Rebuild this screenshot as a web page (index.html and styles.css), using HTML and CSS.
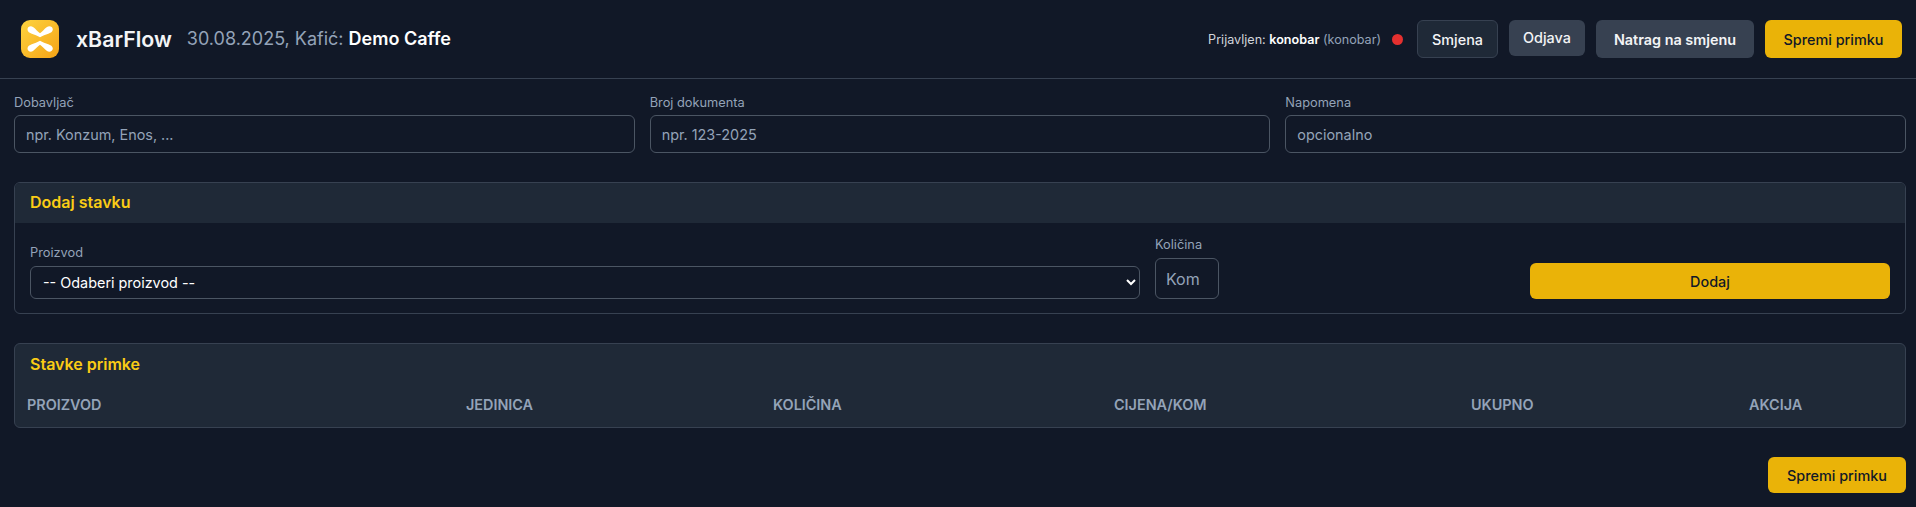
FILE: index.html
```html
<!DOCTYPE html>
<html lang="hr">
<head>
<meta charset="utf-8">
<title>xBarFlow</title>
<link rel="stylesheet" href="styles.css">
</head>
<body>
<header class="topbar">
  <div class="brand">
    <svg class="logo" viewBox="0 0 38 38" aria-hidden="true">
      <defs>
        <linearGradient id="lg" x1="0" y1="0" x2="1" y2="1">
          <stop offset="0" stop-color="#fdd33f"/>
          <stop offset="1" stop-color="#f5a316"/>
        </linearGradient>
      </defs>
      <rect width="38" height="38" rx="9" fill="url(#lg)"/>
      <path fill="#fff" d="M6.500 9.500C6.500 6.500 9.800 5.500 12 7C14.800 8.800 17 12.200 19 13.200C21 12.200 23.200 8.800 26 7C28.200 5.500 31.800 6.500 31.800 9.500C31.800 11.800 29.500 12.900 27.300 13.800C24.500 14.800 21.500 15.800 19 17.300C16.500 15.800 13.500 14.800 10.800 13.800C8.700 12.900 6.500 11.800 6.500 9.500Z"/>
      <path fill="#fff" d="M6.500 28.500C6.500 31.500 9.800 32.500 12 31C14.800 29.200 17 25.800 19 24.800C21 25.800 23.200 29.200 26 31C28.200 32.500 31.800 31.500 31.800 28.500C31.800 26.200 29.500 25.100 27.300 24.200C24.500 23.200 21.500 22.200 19 20.700C16.500 22.200 13.500 23.200 10.800 24.200C8.700 25.100 6.500 26.200 6.500 28.500Z"/>
    </svg>
    <span class="app-name">xBarFlow</span>
    <span class="context">30.08.2025, Kafić: <strong>Demo Caffe</strong></span>
  </div>
  <div class="actions">
    <span class="user">Prijavljen: <strong>konobar</strong> <span class="role">(konobar)</span></span>
    <span class="status-dot"></span>
    <button class="btn btn-outline" type="button">Smjena</button>
    <button class="btn btn-gray btn-short" type="button">Odjava</button>
    <button class="btn btn-gray btn-strong" type="button">Natrag na smjenu</button>
    <button class="btn btn-primary" type="button">Spremi primku</button>
  </div>
</header>

<main class="content">
  <section class="doc-fields">
    <label class="field"><span class="field-label">Dobavljač</span><input class="input" placeholder="npr. Konzum, Enos, ..."></label>
    <label class="field"><span class="field-label">Broj dokumenta</span><input class="input" placeholder="npr. 123-2025"></label>
    <label class="field"><span class="field-label">Napomena</span><input class="input" placeholder="opcionalno"></label>
  </section>

  <section class="card add-card">
    <h2 class="card-head">Dodaj stavku</h2>
    <div class="add-body">
      <label class="field product-field"><span class="field-label">Proizvod</span>
        <select class="select"><option>-- Odaberi proizvod --</option></select>
      </label>
      <label class="field qty-field"><span class="field-label">Količina</span><input class="input qty-input" placeholder="Kom"></label>
      <button class="btn btn-primary btn-add" type="button">Dodaj</button>
    </div>
  </section>

  <section class="card items-card">
    <h2 class="items-title">Stavke primke</h2>
    <table class="items">
      <colgroup>
        <col class="c1"><col class="c2"><col class="c3"><col class="c4"><col class="c5"><col class="c6">
      </colgroup>
      <thead>
        <tr><th>Proizvod</th><th>Jedinica</th><th>Količina</th><th>Cijena/kom</th><th>Ukupno</th><th>Akcija</th></tr>
      </thead>
    </table>
  </section>

  <div class="footer-actions">
    <button class="btn btn-primary btn-save" type="button">Spremi primku</button>
  </div>
</main>
</body>
</html>
```

FILE: styles.css
```css
* { box-sizing: border-box; }
html, body { height: 100%; }
body {
  margin: 0;
  background: #111827;
  color: #f3f4f6;
  font-family: Inter, "Liberation Sans", sans-serif;
  overflow: hidden;
}
.topbar {
  height: 79px;
  border-bottom: 1px solid #374151;
  padding: 0 14px 0 21px;
  display: flex;
  align-items: center;
  justify-content: space-between;
}
.brand { display: flex; align-items: center; }
.logo { width: 38px; height: 38px; margin-right: 17px; }
.app-name { font-size: 21.300px; font-weight: 600; color: #f3f4f6; margin-right: 15px; margin-top: -1px; }
.context { font-size: 18px; color: #94a3b8; margin-top: -1px; }
.context strong { color: #fff; font-weight: 600; }
.actions { display: flex; align-items: center; }
.user { font-size: 12.600px; color: #d1d5db; margin-right: 11px; }
.user strong { color: #fff; font-weight: 600; }
.role { color: #94a3b8; }
.status-dot { width: 11px; height: 11px; border-radius: 50%; background: #e5302f; margin-right: 14px; }
.btn {
  font-family: inherit;
  font-size: 14.400px;
  font-weight: 500;
  border: 1px solid transparent;
  border-radius: 6px;
  height: 38px;
  cursor: pointer;
}
.btn-outline { width: 81px; margin-right: 11px; background: #1f2937; border-color: #374151; color: #f3f4f6; }
.btn-gray { background: #374151; color: #f3f4f6; }
.btn-short { width: 76px; height: 36px; margin: 0 11px 2px 0; padding-bottom: 3px; }
.btn-strong { width: 158px; margin-right: 11px; font-weight: 600; }
.btn-primary { background: #eab308; color: #111827; width: 137px; }
.content { padding: 0 10px 0 14px; }
.doc-fields {
  display: grid;
  grid-template-columns: repeat(3, 1fr);
  gap: 15px;
  margin-top: 16px;
}
.field { display: flex; flex-direction: column; }
.field-label { font-size: 12.800px; line-height: 16px; color: #94a3b8; margin-bottom: 4px; }
.input, .select {
  font-family: inherit;
  font-size: 14.400px;
  background: #111827;
  border: 1px solid #4b5563;
  border-radius: 6px;
  color: #f3f4f6;
  outline: none;
}
.input { height: 38px; padding: 0 11px; width: 100%; }
.input::placeholder { color: #94a3b8; opacity: 1; }
.card {
  border: 1px solid #374151;
  border-radius: 6px;
  overflow: hidden;
}
.add-card { margin-top: 29px; height: 132px; }
.card-head {
  margin: 0;
  height: 40px;
  padding: 0 15px 2px;
  display: flex;
  align-items: center;
  background: #1f2937;
  color: #facc15;
  font-size: 16px;
  font-weight: 600;
}
.add-body {
  display: flex;
  align-items: flex-end;
  padding: 0 15px;
  height: 90px;
  padding-bottom: 14px;
}
.product-field { width: 1110px; margin-right: 15px; }
.product-field .field-label { margin-bottom: 5px; }
.select {
  height: 33px;
  width: 100%;
  padding: 0 8px;
  color-scheme: dark;
  color: #fff;
}
.qty-field { width: 64px; margin-right: 311px; }
.qty-field .field-label { margin-bottom: 5px; }
.qty-input { height: 41px; padding: 0 10px; font-size: 16px; }
.btn-add { width: 360px; height: 36px; }
.items-card { margin-top: 29px; height: 85px; background: #1f2937; }
.items-title {
  margin: 0;
  padding: 8px 15px 0;
  color: #facc15;
  font-size: 16px;
  line-height: 24px;
  font-weight: 600;
}
.items { width: 100%; table-layout: fixed; border-collapse: collapse; margin-top: 15px; }
.items th {
  text-align: left;
  padding: 4px 12px;
  font-size: 14.400px;
  line-height: 20px;
  font-weight: 600;
  color: #94a3b8;
  text-transform: uppercase;
}
.c1 { width: 439px; }
.c2 { width: 307px; }
.c3 { width: 341px; }
.c4 { width: 357px; }
.c5 { width: 278px; }
.c6 { width: 168px; }
.footer-actions { display: flex; justify-content: flex-end; margin-top: 29px; }
.btn-save { width: 138px; height: 36px; }
```
